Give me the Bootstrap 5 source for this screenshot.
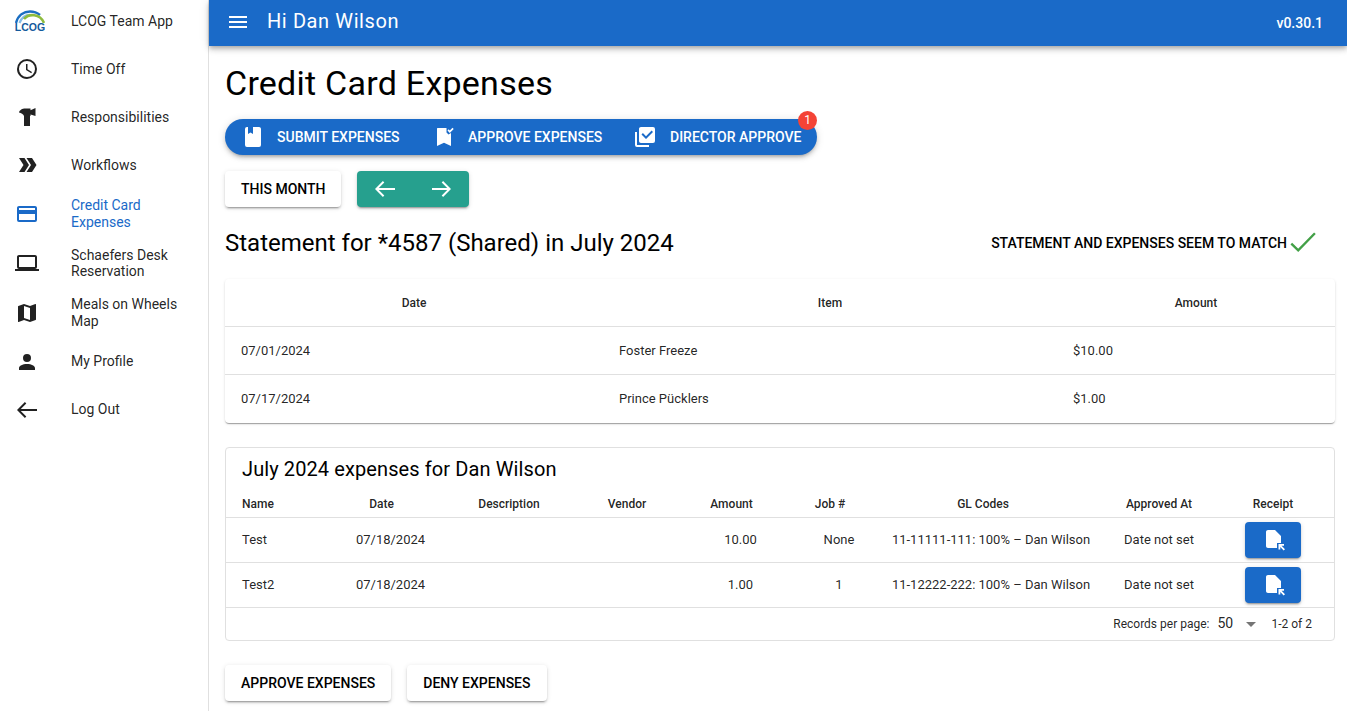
<!DOCTYPE html>
<html lang="en">
<head>
  <meta charset="UTF-8">
  <title>Credit Card Expenses</title>
  <link href="https://cdn.jsdelivr.net/npm/bootstrap@5.3.0/dist/css/bootstrap.min.css" rel="stylesheet">
  <style>
    html, body { height: 711px; overflow: hidden; }
    body { font-family: Roboto, "Liberation Sans", sans-serif; font-size: 14px; color: #000; background: #fff; }
    svg { fill: currentColor; display: block; flex: none; }
    .side-drawer { width: 209px; height: 711px; border-right: 1px solid #e0e0e0; flex: none; overflow: hidden; color: rgba(0,0,0,.87); }
    .side-list { margin-top: -3px; }
    .side-item { display: flex; align-items: center; min-height: 48px; padding: 0 16px 0 15px; font-size: 14px; line-height: 16.5px; letter-spacing: 0; }
    .side-item svg { margin-right: 32px; width: 24px; height: 24px; }
    .side-item.tall { height: 49.5px; }
    .side-item.is-active { color: #1a6ac8; }
    .side-item svg.lcog-logo { width: 30px; height: 24px; margin-right: 26px; }
    .top-bar { height: 46px; background: #1a6ac8; color: #fff; box-shadow: 0 2px 4px -1px rgba(0,0,0,.2), 0 4px 5px rgba(0,0,0,.14), 0 1px 10px rgba(0,0,0,.12); padding: 0 24px 3px 17px; position: relative; z-index: 2; }
    .top-title { font-size: 20px; letter-spacing: .6px; margin-left: 17px; padding-bottom: 2px; }
    .top-version { font-size: 14px; font-weight: 500; padding-top: 3px; }
    .page-body { padding: 0 12px 0 16px; }
    .page-title { font-size: 34px; font-weight: 400; line-height: 40px; letter-spacing: .25px; margin: 17px 0 0; }
    .pill-nav { width: 592px; height: 36px; margin-top: 16px; background: #1a6ac8; color: #fff; border-radius: 18px; box-shadow: 0 3px 3px -2px rgba(0,0,0,.2), 0 3px 4px rgba(0,0,0,.14), 0 1px 8px rgba(0,0,0,.12); font-size: 14px; font-weight: 500; padding-left: 16px; }
    .pill-tab { display: flex; align-items: center; }
    .pill-tab svg { width: 24px; height: 24px; margin-right: 12px; }
    .pill-tab.tab-one { width: 191px; }
    .pill-tab.tab-two { width: 201px; }
    .pill-tab.tab-three svg { margin-right: 13px; }
    .count-dot { position: absolute; top: -8px; right: 0; width: 19px; height: 19px; border-radius: 50%; background: #f44336; color: #fff; font-size: 12px; font-weight: 400; line-height: 19px; text-align: center; }
    .flat-btn { height: 36px; border: 0; border-radius: 4px; background: #fff; color: #000; font-size: 14px; font-weight: 500; padding: 0 16px; box-shadow: 0 3px 1px -2px rgba(0,0,0,.2), 0 2px 2px rgba(0,0,0,.14), 0 1px 5px rgba(0,0,0,.12); }
    .arrow-group { width: 112px; height: 36px; margin-left: 16px; background: #26a08e; color: #fff; border-radius: 4px; box-shadow: 0 3px 1px -2px rgba(0,0,0,.2), 0 2px 2px rgba(0,0,0,.14), 0 1px 5px rgba(0,0,0,.12); padding: 0 15px; }
    .arrow-group svg { width: 24px; height: 24px; }
    .statement-row { margin-top: 16px; height: 40px; }
    .statement-title { font-size: 24px; line-height: 40px; font-weight: 400; margin: 0; }
    .match-note { font-size: 14px; font-weight: 500; color: #000; margin-right: 19px; }
    .match-note svg { width: 26px; height: 26px; color: #43a047; margin-left: 3px; }
    .raised-sheet { margin-top: 16px; border-radius: 4px; overflow: hidden; box-shadow: 0 2px 1px -1px rgba(0,0,0,.2), 0 1px 1px rgba(0,0,0,.14), 0 1px 3px rgba(0,0,0,.12); }
    .data-grid { table-layout: fixed; width: 100%; margin: 0; font-size: 13px; --bs-table-color: rgba(0,0,0,.87); }
    .data-grid th { font-size: 12px; font-weight: 500; text-align: center; }
    .data-grid td, .data-grid th { border-bottom: 1px solid #e0e0e0; padding: 0 16px; vertical-align: middle; }
    .sheet-grid th { height: 47px; padding-top: 2px; }
    .sheet-grid td { height: 48px; padding-top: 2px; }
    .sheet-grid tr:last-child td { border-bottom: 0; height: 49px; padding-top: 0; padding-bottom: 1px; }
    .outline-sheet { margin-top: 24px; height: 194px; border: 1px solid #e0e0e0; border-radius: 4px; overflow: hidden; }
    .outline-title { font-size: 20px; line-height: 24px; font-weight: 400; letter-spacing: .1px; margin: 9px 0 0 16px; }
    .expense-grid { margin-top: 10px; }
    .expense-grid th { height: 26px; padding: 0; }
    .expense-grid td { height: 45px; padding: 0; text-align: center; }
    .expense-grid .cell-name { text-align: left; padding-left: 16px; }
    .expense-grid .shift-head { padding-right: 18px; }
    .expense-grid .shift-less { padding-right: 8px; }
    .expense-grid .shift-gl { padding-right: 16px; }
    .expense-grid .cell-receipt { padding-right: 8px; }
    .receipt-btn { display: inline-flex; align-items: center; justify-content: center; vertical-align: middle; width: 56px; height: 36px; border: 0; padding: 0; border-radius: 4px; background: #1a6ac8; color: #fff; box-shadow: 0 3px 1px -2px rgba(0,0,0,.2), 0 2px 2px rgba(0,0,0,.14), 0 1px 5px rgba(0,0,0,.12); }
    .receipt-btn svg { width: 24px; height: 24px; }
    .pager-row { height: 32px; font-size: 12px; color: rgba(0,0,0,.87); padding-right: 22px; }
    .pager-value { font-size: 14px; margin-left: 8px; width: 29px; }
    .pager-caret { width: 0; height: 0; border-left: 5px solid transparent; border-right: 5px solid transparent; border-top: 5px solid rgba(0,0,0,.54); margin: 1px 15px 0 0; }
    .action-row { margin-top: 24px; }
  </style>
</head>
<body>
<div class="d-flex">
  <nav class="side-drawer">
    <div class="side-list">
      <div class="side-item">
        <svg class="lcog-logo" viewBox="0 0 30 24">
          <path d="M1 14C3 6 9 2.5 15 2.5C19 2.5 22 3.5 25 6" fill="none" stroke="#1b6ec2" stroke-width="2.4"/>
          <path d="M4.5 14C6.5 8.5 10.5 5.8 15 5.8" fill="none" stroke="#86bbe6" stroke-width="2.2"/>
          <path d="M9 10C13.5 4.5 25 4 29 14" fill="none" stroke="#8dbb3e" stroke-width="2.6"/>
          <text x="15" y="22" text-anchor="middle" font-family="Liberation Sans, sans-serif" font-size="10.5" font-weight="700" fill="#155a9c">LCOG</text>
        </svg>
        <span>LCOG Team App</span>
      </div>
      <div class="side-item"><svg viewBox="0 0 24 24"><path d="M12,20A8,8 0 0,0 20,12A8,8 0 0,0 12,4A8,8 0 0,0 4,12A8,8 0 0,0 12,20M12,2A10,10 0 0,1 22,12A10,10 0 0,1 12,22C6.47,22 2,17.5 2,12A10,10 0 0,1 12,2M12.5,7V12.25L17,14.92L16.25,16.15L11,13V7H12.5Z"/></svg><span>Time Off</span></div>
      <div class="side-item"><svg viewBox="0 0 24 24"><path d="M4 7.5C4.5 5 7.5 3.5 10 3.5H15.5V5.2L20.5 3V11L15.5 9.5V11H15V21H9V11C8.5 9.5 6 7.8 4 7.5Z"/></svg><span>Responsibilities</span></div>
      <div class="side-item"><svg viewBox="0 0 24 24"><path d="M4 5H9.5L14 12 9.5 19H4L8.5 12ZM11.5 5H17L21.5 12 17 19H11.5L16 12Z"/></svg><span>Workflows</span></div>
      <div class="side-item is-active tall"><svg viewBox="0 0 24 24"><path d="M20,8H4V6H20M20,18H4V12H20M20,4H4C2.89,4 2,4.89 2,6V18A2,2 0 0,0 4,20H20A2,2 0 0,0 22,18V6C22,4.89 21.1,4 20,4Z"/></svg><span>Credit Card<br>Expenses</span></div>
      <div class="side-item tall"><svg viewBox="0 0 24 24"><path d="M4,6H20V16H4M20,18A2,2 0 0,0 22,16V6C22,4.89 21.1,4 20,4H4C2.89,4 2,4.89 2,6V16A2,2 0 0,0 4,18H0V20H24V18H20Z"/></svg><span>Schaefers Desk<br>Reservation</span></div>
      <div class="side-item tall"><svg viewBox="0 0 24 24"><path d="M15,19L9,16.89V5L15,7.11M20.5,3C20.44,3 20.39,3 20.34,3L15,5.1L9,3L3.36,4.9C3.15,4.97 3,5.15 3,5.38V20.5A0.5,0.5 0 0,0 3.5,21C3.55,21 3.61,21 3.66,20.97L9,18.9L15,21L20.64,19.1C20.85,19 21,18.85 21,18.62V3.5A0.5,0.5 0 0,0 20.5,3Z"/></svg><span>Meals on Wheels<br>Map</span></div>
      <div class="side-item"><svg viewBox="0 0 24 24"><path d="M12,4A4,4 0 0,1 16,8A4,4 0 0,1 12,12A4,4 0 0,1 8,8A4,4 0 0,1 12,4M12,14C16.42,14 20,15.79 20,18V20H4V18C4,15.79 7.58,14 12,14Z"/></svg><span>My Profile</span></div>
      <div class="side-item"><svg viewBox="0 0 24 24"><path d="M22 11V13H5.8L11.3 18.5 9.9 19.9 2 12 9.9 4.1 11.3 5.5 5.8 11Z"/></svg><span>Log Out</span></div>
    </div>
  </nav>

  <div class="flex-grow-1" style="min-width:0">
    <header class="top-bar d-flex align-items-center">
      <svg viewBox="0 0 24 24" width="24" height="24"><path d="M3,6H21V8H3V6M3,11H21V13H3V11M3,16H21V18H3V16Z"/></svg>
      <div class="top-title">Hi Dan Wilson</div>
      <div class="top-version ms-auto">v0.30.1</div>
    </header>

    <main class="page-body">
      <h1 class="page-title">Credit Card Expenses</h1>

      <div class="pill-nav d-flex align-items-center position-relative">
        <div class="pill-tab tab-one"><svg viewBox="0 0 24 24"><path d="M18,22A2,2 0 0,0 20,20V4C20,2.89 19.1,2 18,2H12V9L9.5,7.5L7,9V2H6A2,2 0 0,0 4,4V20A2,2 0 0,0 6,22H18Z"/></svg>SUBMIT EXPENSES</div>
        <div class="pill-tab tab-two"><svg viewBox="0 0 24 24"><path d="M5.5 3H14.5V7.5L16.5 9.5 19 8V21L12 17.8 5 21V3.5ZM15.5 5.5L16.7 4.3 17.8 5.5 20.5 2.8 21.7 4 17.8 8Z"/></svg>APPROVE EXPENSES</div>
        <div class="pill-tab tab-three"><svg viewBox="0 0 24 24"><path d="M22,16A2,2 0 0,1 20,18H8C6.89,18 6,17.1 6,16V4C6,2.89 6.89,2 8,2H20A2,2 0 0,1 22,4V16M16,20V22H4A2,2 0 0,1 2,20V7H4V20H16M13,14L20,7L18.59,5.59L13,11.17L9.91,8.09L8.5,9.5L13,14Z"/></svg>DIRECTOR APPROVE</div>
        <span class="count-dot">1</span>
      </div>

      <div class="d-flex mt-3">
        <button class="flat-btn" type="button">THIS MONTH</button>
        <div class="arrow-group d-flex align-items-center justify-content-between">
          <svg viewBox="0 0 24 24"><path d="M23 11V13H6.8L12.3 18.5 10.9 19.9 3 12 10.9 4.1 12.3 5.5 6.8 11Z"/></svg>
          <svg viewBox="0 0 24 24"><path d="M2 11V13H17.2L11.7 18.5 13.1 19.9 21 12 13.1 4.1 11.7 5.5 17.2 11Z"/></svg>
        </div>
      </div>

      <div class="statement-row d-flex align-items-center justify-content-between">
        <h2 class="statement-title">Statement for *4587 (Shared) in July 2024</h2>
        <div class="match-note d-flex align-items-center">STATEMENT AND EXPENSES SEEM TO MATCH
          <svg viewBox="0 0 24 24"><path d="M1.2 12.5L7.6 18.8 23 3" fill="none" stroke="currentColor" stroke-width="2.2"/></svg>
        </div>
      </div>

      <div class="raised-sheet">
        <table class="table data-grid sheet-grid">
          <colgroup><col style="width:378px"><col style="width:454px"><col></colgroup>
          <thead><tr><th>Date</th><th>Item</th><th>Amount</th></tr></thead>
          <tbody>
            <tr><td>07/01/2024</td><td>Foster Freeze</td><td>$10.00</td></tr>
            <tr><td>07/17/2024</td><td>Prince Pücklers</td><td>$1.00</td></tr>
          </tbody>
        </table>
      </div>

      <div class="outline-sheet">
        <div class="outline-title">July 2024 expenses for Dan Wilson</div>
        <table class="table data-grid expense-grid">
          <colgroup>
            <col style="width:114px"><col style="width:101px"><col style="width:144px"><col style="width:102px"><col style="width:107px"><col style="width:90px"><col style="width:214px"><col style="width:122px"><col>
          </colgroup>
          <thead>
            <tr>
              <th class="cell-name">Name</th><th class="shift-head">Date</th><th class="shift-less">Description</th><th class="shift-head">Vendor</th><th class="shift-head">Amount</th><th class="shift-head">Job #</th><th class="shift-gl">GL Codes</th><th>Approved At</th><th class="cell-receipt">Receipt</th>
            </tr>
          </thead>
          <tbody>
            <tr>
              <td class="cell-name">Test</td><td>07/18/2024</td><td></td><td></td><td>10.00</td><td>None</td><td>11-11111-111: 100% – Dan Wilson</td><td>Date not set</td>
              <td class="cell-receipt"><button class="receipt-btn" type="button" aria-label="Receipt"><svg viewBox="0 0 24 24"><path d="M7 2H14L20 8V15H16V20H7C5.9 20 5 19.1 5 18V4C5 2.9 5.9 2 7 2ZM17.5 16H23V17.8H20.6L24 21.2 22.7 22.5 19.3 19.1V21.5H17.5Z"/></svg></button></td>
            </tr>
            <tr>
              <td class="cell-name">Test2</td><td>07/18/2024</td><td></td><td></td><td>1.00</td><td>1</td><td>11-12222-222: 100% – Dan Wilson</td><td>Date not set</td>
              <td class="cell-receipt"><button class="receipt-btn" type="button" aria-label="Receipt"><svg viewBox="0 0 24 24"><path d="M7 2H14L20 8V15H16V20H7C5.9 20 5 19.1 5 18V4C5 2.9 5.9 2 7 2ZM17.5 16H23V17.8H20.6L24 21.2 22.7 22.5 19.3 19.1V21.5H17.5Z"/></svg></button></td>
            </tr>
          </tbody>
        </table>
        <div class="pager-row d-flex align-items-center justify-content-end">
          <span>Records per page:</span>
          <span class="pager-value">50</span>
          <span class="pager-caret"></span>
          <span>1-2 of 2</span>
        </div>
      </div>

      <div class="action-row d-flex gap-3">
        <button class="flat-btn" type="button">APPROVE EXPENSES</button>
        <button class="flat-btn" type="button">DENY EXPENSES</button>
      </div>
    </main>
  </div>
</div>
<script src="https://cdn.jsdelivr.net/npm/bootstrap@5.3.0/dist/js/bootstrap.bundle.min.js"></script>
</body>
</html>
